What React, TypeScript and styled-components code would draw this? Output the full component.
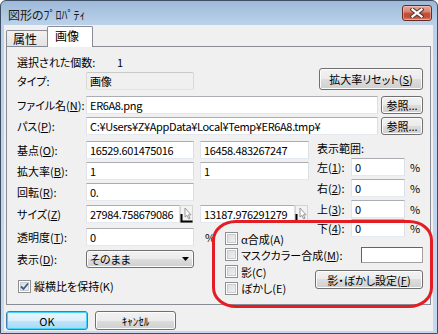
import React from 'react';
import styled, { createGlobalStyle } from 'styled-components';

const GlobalStyle = createGlobalStyle`
    html, body {
        margin: 0;
        padding: 0;
        background: #ffffff;
    }
    body {
        font-family: "Noto Sans CJK JP", "Noto Sans", sans-serif;
        font-size: 11px;
        font-weight: 400;
        font-feature-settings: "palt";
        color: #000000;
    }
    * {
        box-sizing: border-box;
    }
`;

const Mnemonic: React.FC<{ children: React.ReactNode }> = ({ children }) => <Key>{children}</Key>;

const CheckBox: React.FC<{ checked?: boolean }> = ({ checked }) => (
    <Box>
        {checked ? (
            <svg width="9" height="9" viewBox="0 0 9 9">
                <path d="M1 4.5 L3.5 7 L8 1.5" stroke="#3d5a8f" strokeWidth="1.8" fill="none" />
            </svg>
        ) : null}
    </Box>
);

const LinkButton: React.FC = () => (
    <LinkBtn>
        <svg width="13" height="18" viewBox="0 0 13 18">
            <rect x="0.5" y="0.5" width="12" height="17" fill="#f2f2f2" stroke="#d4d4d4" />
            <path d="M5 3 L5 12 L7 10.3 L8.6 13.8 L10 13.2 L8.4 9.8 L11 9.8 Z" fill="#ffffff" stroke="#8c8c8c" strokeWidth="0.9" />
            <path d="M1.5 9 V16.5 H12.5" stroke="#000000" strokeWidth="2" fill="none" />
        </svg>
    </LinkBtn>
);

const RANGE_SIDES = ['左', '右', '上', '下'];

const App: React.FC = () => {
    return (
        <>
            <GlobalStyle />
            <Window>
                <TitleBar>
                    <Title>図形のﾌﾟﾛﾊﾟﾃｨ</Title>
                    <CloseButton>
                        <svg width="14" height="10" viewBox="0 0 14 10">
                            <path d="M2.5 1.5 L11.5 8.5 M11.5 1.5 L2.5 8.5" stroke="#5a3a36" strokeWidth="4.2" strokeLinecap="square" />
                            <path d="M2.5 1.5 L11.5 8.5 M11.5 1.5 L2.5 8.5" stroke="#ffffff" strokeWidth="2.2" strokeLinecap="square" />
                        </svg>
                    </CloseButton>
                </TitleBar>
                <Client>
                    <TabStrip>
                        <Tab>属性</Tab>
                        <Tab $active>画像</Tab>
                    </TabStrip>
                    <Panel>
                        <CountRow>
                            <Label $w={100}>選択された個数:</Label>
                            <span>1</span>
                        </CountRow>
                        <TypeRow>
                            <Label>タイプ:</Label>
                            <TextBox $w={108} $readOnly readOnly defaultValue="画像" />
                            <Spacer />
                            <Button $w={104} $h={22}>
                                拡大率リセット(<Mnemonic>S</Mnemonic>)
                            </Button>
                        </TypeRow>
                        <Row $top={6}>
                            <Label>
                                ファイル名(<Mnemonic>N</Mnemonic>):
                            </Label>
                            <TextBox $w={292} readOnly defaultValue="ER6A8.png" />
                            <Button $w={42} $h={18} $left={3}>
                                参照...
                            </Button>
                        </Row>
                        <Row $top={3}>
                            <Label>
                                パス(<Mnemonic>P</Mnemonic>):
                            </Label>
                            <TextBox $w={292} readOnly defaultValue="C:¥Users¥Z¥AppData¥Local¥Temp¥ER6A8.tmp¥" />
                            <Button $w={42} $h={18} $left={3}>
                                参照...
                            </Button>
                        </Row>

                        <Middle>
                            <UpperSection>
                                <UpperLeft>
                                    <Row>
                                        <Label>
                                            基点(<Mnemonic>O</Mnemonic>):
                                        </Label>
                                        <TextBox $w={108} readOnly defaultValue="16529.601475016" />
                                        <TextBox $w={109} $left={6} readOnly defaultValue="16458.483267247" />
                                    </Row>
                                    <Row $top={3}>
                                        <Label>
                                            拡大率(<Mnemonic>B</Mnemonic>):
                                        </Label>
                                        <TextBox $w={108} readOnly defaultValue="1" />
                                        <TextBox $w={109} $left={6} readOnly defaultValue="1" />
                                    </Row>
                                    <Row $top={3}>
                                        <Label>
                                            回転(<Mnemonic>R</Mnemonic>):
                                        </Label>
                                        <TextBox $w={108} readOnly defaultValue="0." />
                                    </Row>
                                    <Row $top={4}>
                                        <Label>
                                            サイズ(<Mnemonic>Z</Mnemonic>)
                                        </Label>
                                        <TextBox $w={94} readOnly defaultValue="27984.758679086" />
                                        <LinkButton />
                                        <TextBox $w={95} $left={7} readOnly defaultValue="13187.976291279" />
                                        <LinkButton />
                                    </Row>
                                </UpperLeft>
                                <RangeColumn>
                                    <RangeTitle>表示範囲:</RangeTitle>
                                    {RANGE_SIDES.map((side, i) => (
                                        <Row key={side} $top={i === 3 ? 1 : 3}>
                                            <Label $w={34}>
                                                {side}(<Mnemonic>{i + 1}</Mnemonic>):
                                            </Label>
                                            <TextBox $w={54} readOnly defaultValue="0" />
                                            <Percent $left={5}>%</Percent>
                                        </Row>
                                    ))}
                                </RangeColumn>
                            </UpperSection>

                            <LowerSection>
                                <LowerLeft>
                                    <Row $top={5}>
                                        <Label>
                                            透明度(<Mnemonic>T</Mnemonic>):
                                        </Label>
                                        <TextBox $w={108} readOnly defaultValue="0" />
                                        <Percent $left={11}>%</Percent>
                                    </Row>
                                    <Row $top={4}>
                                        <Label>
                                            表示(<Mnemonic>D</Mnemonic>):
                                        </Label>
                                        <Combo>
                                            <span>そのまま</span>
                                            <svg width="7" height="4" viewBox="0 0 7 4">
                                                <path d="M0 0 H7 L3.5 4 Z" fill="#000000" />
                                            </svg>
                                        </Combo>
                                    </Row>
                                    <CheckRow>
                                        <CheckBox checked />
                                        <span>縦横比を保持(K)</span>
                                    </CheckRow>
                                </LowerLeft>

                                <EffectGroup>
                                    <GroupItem $row="1" $col="1 / span 2">
                                        <CheckBox />
                                        <span>α合成(A)</span>
                                    </GroupItem>
                                    <GroupItem $row="2" $col="1 / span 2">
                                        <CheckBox />
                                        <span>
                                            マスクカラー合成(<Mnemonic>M</Mnemonic>):
                                        </span>
                                    </GroupItem>
                                    <ColorSwatch />
                                    <GroupItem $row="3" $col="1">
                                        <CheckBox />
                                        <span>影(C)</span>
                                    </GroupItem>
                                    <GroupItem $row="4" $col="1">
                                        <CheckBox />
                                        <span>ぼかし(E)</span>
                                    </GroupItem>
                                    <EffectButton>
                                        影・ぼかし設定(<Mnemonic>F</Mnemonic>)
                                    </EffectButton>
                                </EffectGroup>
                            </LowerSection>
                        </Middle>
                    </Panel>
                    <Footer>
                        <Button $w={82} $h={19} $default>
                            OK
                        </Button>
                        <Button $w={81} $h={19} $left={7}>
                            ｷｬﾝｾﾙ
                        </Button>
                    </Footer>
                </Client>
                <Annotation />
            </Window>
        </>
    );
};

// STYLES //
const Window = styled.div`
    position: relative;
    width: 438px;
    height: 334px;
    display: flex;
    flex-direction: column;
    padding: 0 4px 2px 3px;
    border: 1px solid #3f4f63;
    border-radius: 6px 6px 0 0;
    background: linear-gradient(to bottom, #9db9d9 0px, #bcd2ea 24px, #c4d8ee 100%);
`;

const TitleBar = styled.div`
    height: 24px;
    flex: none;
    display: flex;
    justify-content: space-between;
    align-items: flex-start;
    padding: 4px 1px 0 4px;
`;

const Title = styled.div`
    font-size: 12px;
    line-height: 18px;
    margin-top: 1px;
    color: #1a1a1a;
    white-space: nowrap;
`;

const CloseButton = styled.div`
    width: 30px;
    height: 16px;
    display: flex;
    align-items: center;
    justify-content: center;
    border: 1px solid #6a2a24;
    border-radius: 3px;
    background: linear-gradient(to bottom, #e8a898 0%, #d88575 40%, #c24a31 55%, #c4503a 80%, #d98a72 100%);
    box-shadow: inset 0 0 0 1px rgba(255, 220, 210, 0.45);
`;

const Client = styled.div`
    flex: 1;
    display: flex;
    flex-direction: column;
    padding: 1px 2px 1px 2px;
    background: #f0f0f0;
`;

const TabStrip = styled.div`
    height: 20px;
    flex: none;
    display: flex;
    align-items: flex-end;
    position: relative;
    z-index: 1;
`;

const Tab = styled.div<{ $active?: boolean }>`
    height: ${p => (p.$active ? 21 : 16)}px;
    width: ${p => (p.$active ? 46 : 42)}px;
    margin-left: ${p => (p.$active ? -1 : 0)}px;
    margin-bottom: ${p => (p.$active ? -1 : 0)}px;
    padding-left: ${p => (p.$active ? 7 : 6)}px;
    padding-top: ${p => (p.$active ? 1 : 0)}px;
    font-size: 12px;
    line-height: 15px;
    border: 1px solid #898c95;
    border-bottom: none;
    border-radius: 2px 2px 0 0;
    background: ${p => (p.$active ? '#ffffff' : 'linear-gradient(to bottom, #f2f2f2, #e3e3e3)')};
    white-space: nowrap;
`;

const Panel = styled.div`
    height: 259px;
    flex: none;
    padding: 8px 7px 0 10px;
    border: 1px solid #898c95;
    background: #f0f0f0;
`;

const Row = styled.div<{ $top?: number }>`
    display: flex;
    align-items: center;
    height: 18px;
    margin-top: ${p => p.$top ?? 0}px;
`;

const CountRow = styled.div`
    display: flex;
    align-items: center;
    height: 13px;
`;

const TypeRow = styled.div`
    display: flex;
    align-items: flex-end;
    height: 22px;
`;

const Spacer = styled.div`
    flex: 1;
`;

const Label = styled.span<{ $w?: number }>`
    width: ${p => p.$w ?? 69}px;
    flex: none;
    line-height: 18px;
    white-space: nowrap;
`;

const Key = styled.span`
    text-decoration: underline;
    text-underline-offset: 1px;
`;

const TextBox = styled.input<{ $w: number; $left?: number; $readOnly?: boolean }>`
    width: ${p => p.$w}px;
    height: 18px;
    flex: none;
    margin: 0 0 0 ${p => p.$left ?? 0}px;
    padding: 0 2px 0 3px;
    font: inherit;
    font-feature-settings: "palt";
    letter-spacing: -0.35px;
    color: #000000;
    outline: none;
    border: 1px solid;
    border-color: ${p => (p.$readOnly ? '#c9c9c9 #d9d9d9 #e2e2e2 #d9d9d9' : '#abadb3 #dbdfe6 #e3e9ef #e2e3ea')};
    border-radius: ${p => (p.$readOnly ? 2 : 0)}px;
    background: ${p => (p.$readOnly ? '#f0f0f0' : '#ffffff')};
`;

const Button = styled.button<{ $w: number; $h: number; $left?: number; $default?: boolean }>`
    width: ${p => p.$w}px;
    height: ${p => p.$h}px;
    flex: none;
    margin-left: ${p => p.$left ?? 0}px;
    padding: 0;
    font: inherit;
    font-feature-settings: "palt";
    line-height: 14px;
    color: #000000;
    white-space: nowrap;
    border: 1px solid ${p => (p.$default ? '#3c7fb1' : '#707070')};
    border-radius: 3px;
    background: ${p =>
        p.$default
            ? 'linear-gradient(to bottom, #eaf6fd 0%, #d9f0fc 50%, #bee6fd 50%, #a7d9f5 100%)'
            : 'linear-gradient(to bottom, #f2f2f2 0%, #ebebeb 50%, #dddddd 50%, #cfcfcf 100%)'};
    box-shadow: inset 0 0 0 1px ${p => (p.$default ? '#48d4fa' : '#fcfcfc')};
`;

const LinkBtn = styled.div`
    width: 13px;
    height: 18px;
    flex: none;
    display: flex;
`;

const Middle = styled.div`
    margin-top: 6px;
    display: flex;
    flex-direction: column;
`;

const UpperSection = styled.div`
    display: flex;
`;

const UpperLeft = styled.div`
    width: 300px;
    flex: none;
    display: flex;
    flex-direction: column;
`;

const RangeColumn = styled.div`
    display: flex;
    flex-direction: column;
    margin-bottom: -14px;
`;

const RangeTitle = styled.div`
    height: 14px;
    line-height: 14px;
    white-space: nowrap;
`;

const Percent = styled.span<{ $left: number }>`
    margin-left: ${p => p.$left}px;
    line-height: 18px;
`;

const LowerSection = styled.div`
    display: flex;
`;

const LowerLeft = styled.div`
    width: 208px;
    flex: none;
    display: flex;
    flex-direction: column;
`;

const Combo = styled.div`
    width: 108px;
    height: 18px;
    display: flex;
    align-items: center;
    justify-content: space-between;
    padding: 0 4px 0 3px;
    border: 1px solid #707070;
    border-radius: 3px;
    background: linear-gradient(to bottom, #f2f2f2 0%, #ebebeb 50%, #dddddd 50%, #cfcfcf 100%);
    box-shadow: inset 0 0 0 1px #fcfcfc;
    line-height: 14px;
`;

const CheckRow = styled.label`
    display: flex;
    align-items: center;
    gap: 3px;
    height: 14px;
    margin: 11px 0 0 1px;
    white-space: nowrap;
`;

const Box = styled.span`
    width: 13px;
    height: 13px;
    flex: none;
    display: flex;
    align-items: center;
    justify-content: center;
    border: 1px solid #8e8f8f;
    background: #ffffff;
    box-shadow: inset 0 0 0 1px #ffffff, inset 0 0 0 2px #c9ccd1;
    background-image: linear-gradient(135deg, #d6d9dd 0%, #f4f4f4 100%);
`;

const EffectGroup = styled.div`
    width: 198px;
    flex: none;
    padding-top: 8px;
    display: grid;
    grid-template-columns: 90px 108px;
    grid-template-rows: 15px 17px 17px 16px;
    align-items: center;
`;

const GroupItem = styled.label<{ $row: string; $col: string }>`
    grid-row: ${p => p.$row};
    grid-column: ${p => p.$col};
    display: flex;
    align-items: center;
    gap: 3px;
    white-space: nowrap;
`;

const ColorSwatch = styled.div`
    grid-row: 2;
    grid-column: 2;
    justify-self: end;
    width: 62px;
    height: 16px;
    border: 1px solid;
    border-color: #646464 #a0a0a0 #a0a0a0 #646464;
    background: #ffffff;
`;

const EffectButton = styled(Button).attrs({ $w: 108, $h: 19 })`
    grid-row: 3 / span 2;
    grid-column: 2;
    align-self: center;
`;

const Footer = styled.div`
    display: flex;
    margin-top: 6px;
`;

const Annotation = styled.div`
    position: absolute;
    left: 211px;
    top: 219px;
    width: 221px;
    height: 88px;
    border: 3px solid #e41d25;
    border-radius: 24px / 20px;
    pointer-events: none;
`;

export default App;
